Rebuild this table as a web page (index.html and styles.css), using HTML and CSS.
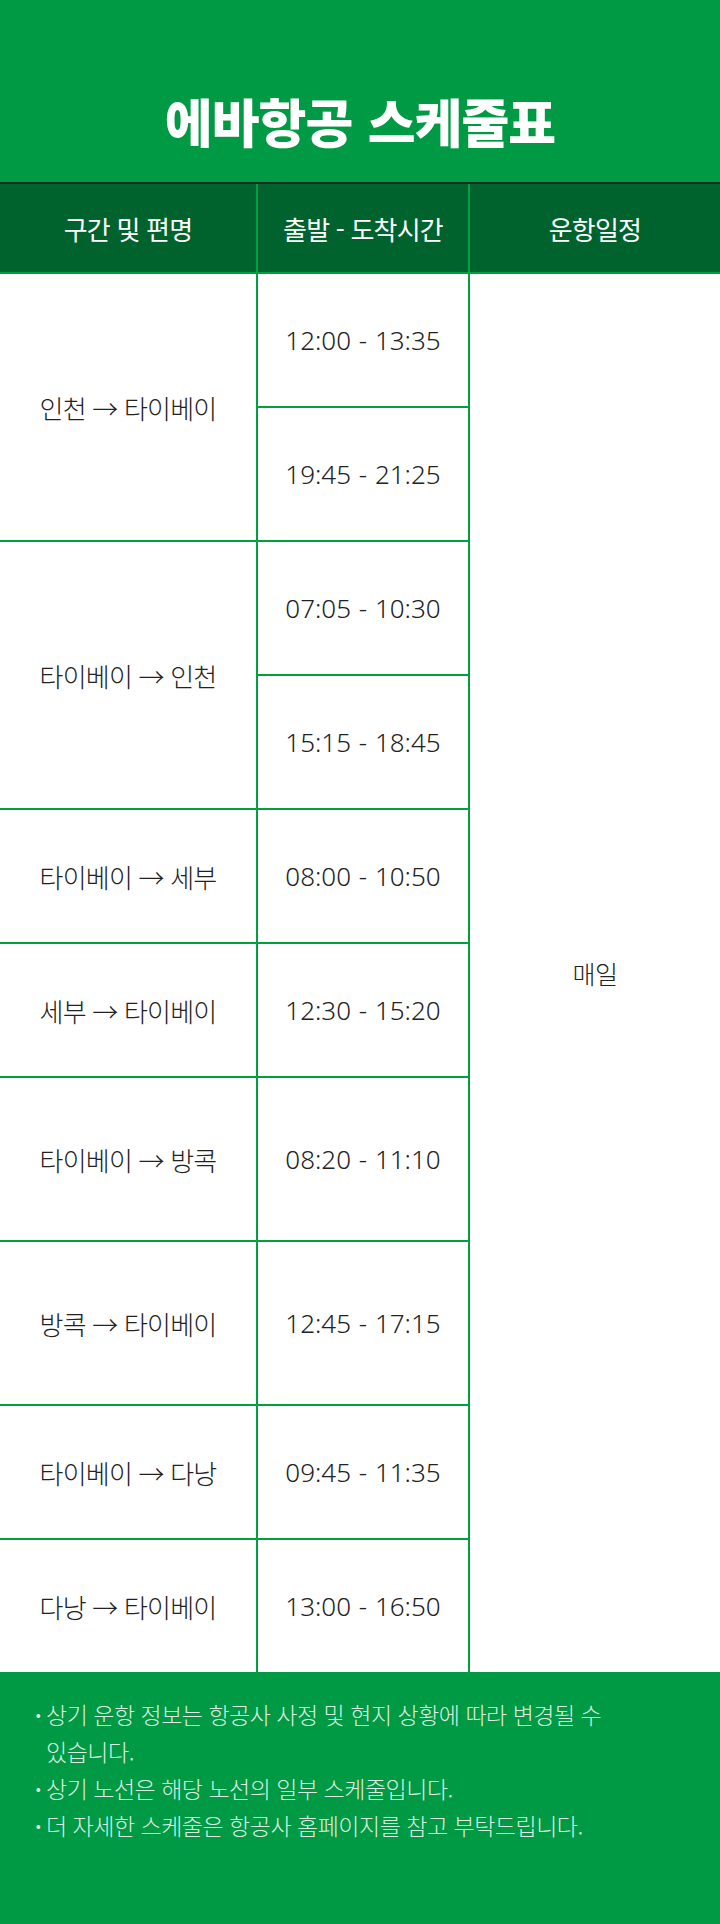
FILE: index.html
```html
<!DOCTYPE html>
<html lang="ko">
<head>
<meta charset="utf-8">
<title>에바항공 스케줄표</title>
<link rel="stylesheet" href="styles.css">
</head>
<body>
<div class="page">
  <header class="hero">
    <h1 class="title">에바항공 스케줄표</h1>
  </header>
  <div class="table">
    <div class="th">구간 및 편명</div>
    <div class="th">출발 - 도착시간</div>
    <div class="th">운항일정</div>

    <div class="td route span2 r1">인천 → 타이베이</div>
    <div class="td time">12:00 - 13:35</div>
    <div class="td daily">매일</div>
    <div class="td time">19:45 - 21:25</div>

    <div class="td route span2">타이베이 → 인천</div>
    <div class="td time">07:05 - 10:30</div>
    <div class="td time">15:15 - 18:45</div>

    <div class="td route">타이베이 → 세부</div>
    <div class="td time">08:00 - 10:50</div>

    <div class="td route">세부 → 타이베이</div>
    <div class="td time">12:30 - 15:20</div>

    <div class="td route">타이베이 → 방콕</div>
    <div class="td time">08:20 - 11:10</div>

    <div class="td route">방콕 → 타이베이</div>
    <div class="td time">12:45 - 17:15</div>

    <div class="td route">타이베이 → 다낭</div>
    <div class="td time">09:45 - 11:35</div>

    <div class="td route">다낭 → 타이베이</div>
    <div class="td time">13:00 - 16:50</div>
  </div>
  <footer class="notes">
    <ul class="note-list">
      <li class="note"><span class="dot">•</span><span class="note-text">상기 운항 정보는 항공사 사정 및 현지 상황에 따라 변경될 수 있습니다.</span></li>
      <li class="note"><span class="dot">•</span><span class="note-text">상기 노선은 해당 노선의 일부 스케줄입니다.</span></li>
      <li class="note"><span class="dot">•</span><span class="note-text">더 자세한 스케줄은 항공사 홈페이지를 참고 부탁드립니다.</span></li>
    </ul>
  </footer>
</div>
</body>
</html>
```
FILE: styles.css
```css
* { box-sizing: border-box; }
html, body { margin: 0; padding: 0; }
body {
  width: 720px;
  font-family: "Noto Sans CJK KR", "Noto Sans", sans-serif;
  background: #ffffff;
}
.page { width: 720px; }

.hero {
  height: 184px;
  background: #009944;
  border-bottom: 2px solid #1f2a22;
  display: flex;
  justify-content: center;
  align-items: flex-start;
  padding-top: 95px;
}
.title {
  margin: 0;
  font-size: 52px;
  line-height: 52px;
  font-weight: 900;
  color: #ffffff;
  letter-spacing: -1px;
  word-spacing: 2px;
}

.table {
  display: grid;
  grid-template-columns: 256px 210px 250px;
  grid-template-rows: 88px 132px 132px 132px 132px 132px 132px 162px 162px 132px 132px;
  column-gap: 2px;
  row-gap: 2px;
  background: #00a040;
}
.th {
  background: #00622d;
  color: #ffffff;
  font-size: 26px;
  font-weight: 400;
  display: flex;
  align-items: center;
  justify-content: center;
  letter-spacing: -0.8px;
}
.td {
  background: #ffffff;
  color: #222222;
  display: flex;
  align-items: center;
  justify-content: center;
}
.route {
  grid-column: 1;
  font-size: 26px;
  font-weight: 300;
  letter-spacing: -0.8px;
}
.span2 { grid-row: span 2; }
.time {
  grid-column: 2;
  font-family: "Noto Sans", "Open Sans", sans-serif;
  font-size: 26px;
  font-weight: 300;
  letter-spacing: 0;
  word-spacing: 1px;
}
.daily {
  grid-column: 3;
  grid-row: 2 / 12;
  font-size: 25px;
  font-weight: 300;
  letter-spacing: -0.5px;
}

.notes {
  height: 252px;
  background: #009944;
  padding: 24px 74px 0 30px;
}
.note-list {
  margin: 0;
  padding: 0;
  list-style: none;
}
.note {
  display: flex;
  align-items: flex-start;
  font-size: 23px;
  font-weight: 300;
  line-height: 37px;
  color: #dcefe2;
  letter-spacing: -0.5px;
  word-break: keep-all;
}
.dot {
  flex: 0 0 16px;
  font-size: 16px;
  text-align: center;
}
.note-text { flex: 1; }
```
